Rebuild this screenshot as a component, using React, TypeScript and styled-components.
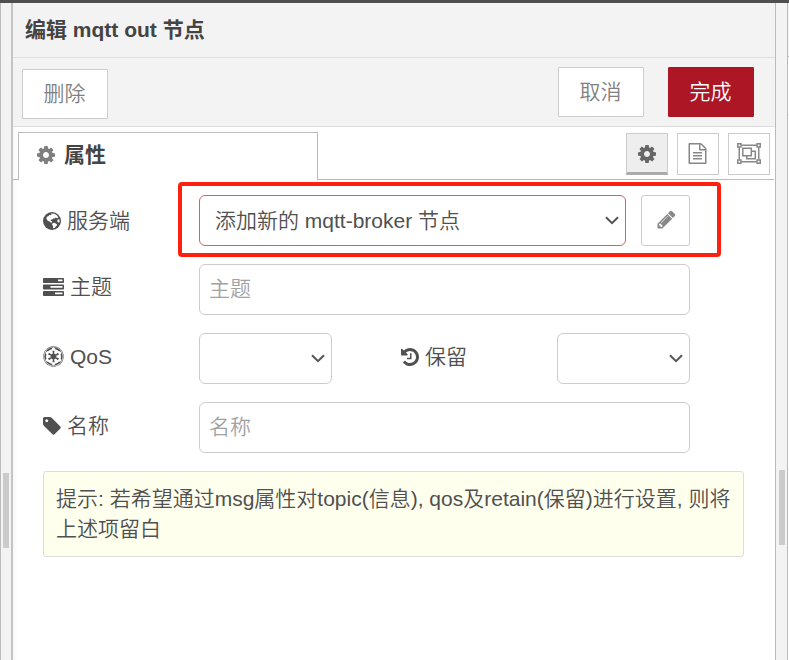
import React from "react";
import styled, { createGlobalStyle, css } from "styled-components";
import { FaEmpire } from "react-icons/fa";

const GlobalStyle = createGlobalStyle`
  *, *::before, *::after { box-sizing: border-box; }
  body {
    margin: 0;
    background: #fff;
    color: #505050;
    font: 350 21px/30px "Liberation Sans", "Noto Sans CJK SC", sans-serif;
    overflow: hidden;
  }
  button, input { font: inherit; }
`;

const Page = styled.div`
  width: 789px;
  height: 660px;
  display: flex;
  border-top: 3px solid #4f4f4f;
  overflow: hidden;
`;

const Gutter = styled.div<{ $side: "left" | "right" }>`
  flex: none;
  width: 13px;
  background: #f3f3f3;
  border-left: 1px solid #bbb;
  border-right: ${(p) => (p.$side === "left" ? "2px solid #c4c4c4" : "1px solid #bbb")};
  padding: ${(p) => (p.$side === "left" ? "470px 0 0 2px" : "467px 0 0 3px")};
`;

const Grip = styled.div`
  width: 6px;
  height: 75px;
  background: #cbcbcb;
`;

const Edge = styled.div`
  flex: 1;
  background: linear-gradient(#f3f3f3 53px, #bbb 53px 54px, #fff 54px 111px, #ddd 111px 112px, #fff 112px);
`;

const Panel = styled.main`
  flex: none;
  width: 762px;
  background: linear-gradient(to right, #f7f7f7, #fff 5px);
`;

const Header = styled.header`
  height: 55px;
  padding: 12px 12px 0;
  background: #f3f3f3;
  border-bottom: 1px solid #ddd;
  color: #444;
  font-weight: 700;
`;

const Toolbar = styled.div`
  height: 69px;
  padding: 9px 21px 0 9px;
  display: flex;
  gap: 24px;
  background: #f3f3f3;
  border-bottom: 1px solid #ddd;
`;

const Button = styled.button<{ $primary?: boolean; $first?: boolean }>`
  width: 86px;
  height: 50px;
  padding: 0 1px 0 0;
  background: ${(p) => (p.$primary ? "#ad1625" : "#fff")};
  color: ${(p) => (p.$primary ? "#fff" : "#808080")};
  border: 1px solid ${(p) => (p.$primary ? "#ad1625" : "#ccc")};
  border-radius: 1px;
  ${(p) => p.$first && css`margin: 2px auto 0 0;`}
`;

const TabBar = styled.div`
  height: 53px;
  padding: 5px 5px 0;
  display: flex;
  width: 761px;
  background: linear-gradient(#bbb, #bbb) bottom / 100% 1px no-repeat;
`;

const Tab = styled.div`
  width: 300px;
  height: 48px;
  padding: 0 17px 0 18px;
  display: flex;
  align-items: flex-start;
  background: #fff;
  border: 1px solid #bbb;
  border-bottom: 0;
  color: #444;
  font-weight: 700;
  line-height: 43px;
  svg { margin: 13px 9px 0 0; color: #7f7f7f; }
`;

const TabButtons = styled.div`
  display: flex;
  gap: 9px;
  margin: 1px -1px 0 auto;
`;

const TabButton = styled.button<{ $active?: boolean }>`
  width: 42px;
  height: 42px;
  padding: 0 1px 1px 0;
  display: grid;
  place-items: center;
  background: ${(p) => (p.$active ? "#eee" : "#fff")};
  color: ${(p) => (p.$active ? "#666" : "#888")};
  border: 1px solid #ccc;
  ${(p) => p.$active && css`padding: 1px 0 0; border-bottom: 3px solid #aaa;`}
`;

const Form = styled.form`
  padding: 15px 30px 0;
`;

const Row = styled.div`
  position: relative;
  display: flex;
  width: 647px;
  height: 51px;
  margin-bottom: 18px;
`;

const Label = styled.label<{ $inner?: boolean; $lift?: number }>`
  flex: none;
  width: ${(p) => (p.$inner ? 225 : 156)}px;
  height: 51px;
  padding: 0 0 ${(p) => p.$lift ?? 0}px ${(p) => (p.$inner ? 69 : 0)}px;
  display: flex;
  align-items: center;
  gap: 6px;
`;

const Input = styled.input`
  width: 491px;
  height: 51px;
  padding: 0 9px 2px;
  border: 1px solid #ccc;
  border-radius: 6px;
  outline: 0;
  background: #fff;
  color: #555;
  &::placeholder { color: #a2a2a2; opacity: 1; }
`;

const Select = styled.div<{ $width: number; $invalid?: boolean }>`
  flex: none;
  width: ${(p) => p.$width}px;
  height: 51px;
  padding: 0 6px 0 15px;
  display: flex;
  align-items: center;
  justify-content: space-between;
  background: #fff;
  border: 1px solid ${(p) => (p.$invalid ? "#d6615f" : "#ccc")};
  border-radius: 6px;
  white-space: nowrap;
`;

const EditButton = styled.button`
  width: 49px;
  height: 51px;
  margin-left: 15px;
  padding: 0 0 2px 1px;
  display: grid;
  place-items: center;
  background: #fff;
  color: #888;
  border: 1px solid #ccc;
  border-radius: 3px;
`;

const Highlight = styled.div`
  position: absolute;
  left: 135px;
  top: -13px;
  width: 543px;
  height: 75px;
  border: 4px solid #ff2010;
  border-radius: 4px;
  pointer-events: none;
`;

const Tips = styled.div`
  width: 701px;
  height: 86px;
  padding: 12px;
  background: #ffffee;
  border: 1px solid #ddd;
  border-radius: 3px;
  white-space: nowrap;
`;

const Svg = styled.svg`
  display: block;
  flex: none;
  fill: currentColor;
`;

const Glyph = ({ d, size = 21, box = "0 0 1792 1792" }: { d: string; size?: number; box?: string }) => (
  <Svg width={size} height={size} viewBox={box}><path d={d} /></Svg>
);

const cog = "M1152 896q0-106-75-181t-181-75-181 75-75 181 75 181 181 75 181-75 75-181zm512-109v222q0 12-8 23t-20 13l-185 28q-19 54-39 91 35 50 107 138 10 12 10 25t-9 23q-27 37-99 108t-94 71q-12 0-26-9l-138-108q-44 23-91 38-16 136-29 186-7 28-36 28h-222q-14 0-24.5-8.5t-11.5-21.5l-28-184q-49-16-90-37l-141 107q-10 9-25 9-14 0-25-11-126-114-165-168-7-10-7-23 0-12 8-23 15-21 51-66.5t54-70.5q-27-50-41-99l-183-27q-13-2-21-12.5t-8-23.5v-222q0-12 8-23t19-13l186-28q14-46 39-92-40-57-107-138-10-12-10-24 0-10 9-23 26-36 98.5-107.5t94.5-71.5q13 0 26 10l138 107q44-23 91-38 16-136 29-186 7-28 36-28h222q14 0 24.5 8.5t11.5 21.5l28 184q49 16 90 37l142-107q9-9 24-9 13 0 25 10 129 119 165 170 7 8 7 22 0 12-8 23-15 21-51 66.5t-54 70.5q26 50 41 98l183 28q13 2 21 12.5t8 23.5z";
const tag = "M576 448q0-53-37.5-90.5t-90.5-37.5-90.5 37.5-37.5 90.5 37.5 90.5 90.5 37.5 90.5-37.5 37.5-90.5zm1067 576q0 53-37 90l-491 492q-39 37-91 37-53 0-90-37l-715-716q-38-37-64.5-101t-26.5-117v-416q0-52 38-90t90-38h416q53 0 117 26.5t102 64.5l715 714q37 39 37 91z";
const history = "M1664 896q0 156-61 298t-164 245-245 164-298 61q-172 0-327-72.5t-264-204.5q-7-10-6.5-22.5t8.5-20.5l137-138q10-9 25-9 16 2 23 12 73 95 179 147t225 52q104 0 198.5-40.5t163.5-109.5 109.5-163.5 40.5-198.5-40.5-198.5-109.5-163.5-163.5-109.5-198.5-40.5q-98 0-188 35.5t-160 101.5l137 138q31 30 14 69-17 40-59 40h-448q-26 0-45-19t-19-45v-448q0-42 40-59 39-17 69 14l130 129q107-101 244.5-156.5t284.5-55.5q156 0 298 61t245 164 164 245 61 298zm-640-288v448q0 14-9 23t-23 9h-320q-14 0-23-9t-9-23v-64q0-14 9-23t23-9h224v-352q0-14 9-23t23-9h64q14 0 23 9t9 23z";
const pencil = "M491 1536l91-91-235-235-91 91v107h128v128h107zm523-928q0-22-22-22-10 0-17 7l-542 542q-7 7-7 17 0 22 22 22 10 0 17-7l542-542q7-7 7-17zm-54-192l416 416-832 832h-416v-416zm683 96q0 53-37 90l-166 166-416-416 166-165q36-38 90-38 53 0 91 38l235 234q37 39 37 91z";
const fileText = "M1596 380q28 28 48 76t20 88v1152q0 40-28 68t-68 28h-1344q-40 0-68-28t-28-68v-1600q0-40 28-68t68-28h896q40 0 88 20t76 48zm-444-244v376h376q-10-29-22-41l-313-313q-12-12-41-22zm384 1528v-1024h-416q-40 0-68-28t-28-68v-416h-768v1536h1280zm-1024-864q0-14 9-23t23-9h704q14 0 23 9t9 23v64q0 14-9 23t-23 9h-704q-14 0-23-9t-9-23v-64zm736 224q14 0 23 9t9 23v64q0 14-9 23t-23 9h-704q-14 0-23-9t-9-23v-64q0-14 9-23t23-9h704zm0 256q14 0 23 9t9 23v64q0 14-9 23t-23 9h-704q-14 0-23-9t-9-23v-64q0-14 9-23t23-9h704z";

const Globe = () => (
  <Svg width="18" height="18" viewBox="0 0 18 18">
    <circle cx="9" cy="9" r="9" />
    <path fill="#fff" d="M8 1.500 11.500 1.800 14.200 3.600 15.400 5.400 14 6.200 12.800 5.600 11.700 6.400 10.500 6.200 9.800 7.300 8.300 7.600 7.500 9 8.900 9.100 9.200 10.500 8.200 10.800 6.400 9.600 4.500 8.600 3.400 6.800 3.900 4.800 5.700 4.100 6.500 2.800 7.600 3.300 8.600 2.600z" />
    <path fill="#fff" d="M9.600 11.200 11.400 10.700 13.500 11.900 14.300 13 12.800 14.500 11.600 16 10 16.300 10.100 14.300 9 12.600zM14.900 7.300 16.500 7.600 16.600 10 15.500 10.800 14.200 9.300z" />
  </Svg>
);

const Tasks = () => (
  <Svg width="21" height="18" viewBox="0 0 21 18">
    <rect width="21" height="5" rx=".8" />
    <rect y="6.500" width="21" height="5" rx=".8" />
    <rect y="13" width="21" height="5" rx=".8" />
    <path fill="#fff" d="M15 1.500h4.500v1.800H15zM7.500 8H19.500v1.800H7.500zM12 14.500h7.500v1.800H12z" />
  </Svg>
);

const ObjectGroup = () => (
  <Svg width="24" height="21" viewBox="0 0 24 21">
    <g fill="none" stroke="currentColor" strokeWidth="1.500">
      <path d="M4.250 2.250h15.500M4.250 18.750h15.500M2.250 4.250v12.500M21.750 4.250v12.500" />
      <path d="M.750.750h3.200v3.200H.750zM20.050.750h3.200v3.200h-3.200zM.750 17.050h3.200v3.200H.750zM20.050 17.050h3.200v3.200h-3.200z" />
      <path d="M5.800 5.300h8.500v7.500H5.800zM14.300 8.200h4v7.500H9.800v-2.900" />
    </g>
  </Svg>
);

const Chevron = () => (
  <Svg width="14" height="9" viewBox="0 0 14 9">
    <path d="M1 1.200 7 7.200 13 1.200" fill="none" stroke="#555" strokeWidth="2" />
  </Svg>
);

const tight = "128 128 1536 1536";

export default function App() {
  return (
    <>
      <GlobalStyle />
      <Page>
        <Gutter $side="left"><Grip /></Gutter>
        <Panel>
          <Header>编辑 mqtt out 节点</Header>
          <Toolbar>
            <Button $first>删除</Button>
            <Button>取消</Button>
            <Button $primary>完成</Button>
          </Toolbar>
          <TabBar>
            <Tab><Glyph d={cog} size={18} box={tight} />属性</Tab>
            <TabButtons>
              <TabButton $active><Glyph d={cog} size={18} box={tight} /></TabButton>
              <TabButton><Glyph d={fileText} /></TabButton>
              <TabButton><ObjectGroup /></TabButton>
            </TabButtons>
          </TabBar>
          <Form onSubmit={(e) => e.preventDefault()}>
            <Row>
              <Label><Globe />服务端</Label>
              <Select $width={427} $invalid>添加新的 mqtt-broker 节点<Chevron /></Select>
              <EditButton type="button"><Glyph d={pencil} /></EditButton>
              <Highlight />
            </Row>
            <Row>
              <Label $lift={5}><Tasks />主题</Label>
              <Input placeholder="主题" />
            </Row>
            <Row>
              <Label $lift={4}><FaEmpire size={21} />QoS</Label>
              <Select $width={133}><span /><Chevron /></Select>
              <Label $inner $lift={4}><Glyph d={history} size={18} box={tight} />保留</Label>
              <Select $width={133}><span /><Chevron /></Select>
            </Row>
            <Row>
              <Label $lift={4}><Glyph d={tag} size={18} box={tight} />名称</Label>
              <Input placeholder="名称" />
            </Row>
            <Tips>提示: 若希望通过msg属性对topic(信息), qos及retain(保留)进行设置, 则将<br />上述项留白</Tips>
          </Form>
        </Panel>
        <Gutter $side="right"><Grip /></Gutter>
        <Edge />
      </Page>
    </>
  );
}
